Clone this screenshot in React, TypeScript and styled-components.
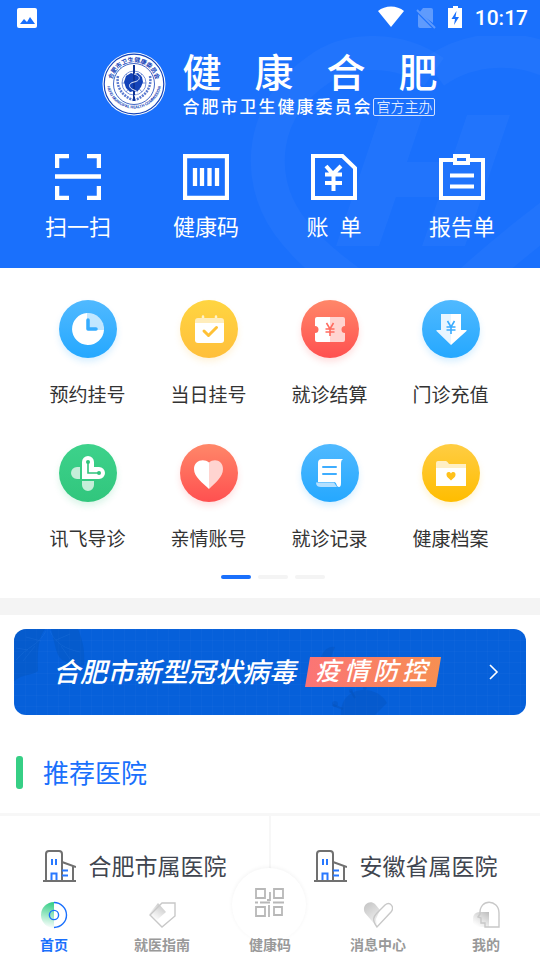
import React from "react";
import styled, { createGlobalStyle } from "styled-components";

const BLUE = "#1a70fc";

const GlobalStyle = createGlobalStyle`
  *, *::before, *::after { box-sizing: border-box; }
  body {
    margin: 0;
    background: #fff;
    color: #333;
    font-family: Roboto, "Noto Sans CJK SC", sans-serif;
    -webkit-font-smoothing: antialiased;
  }
  button {
    margin: 0;
    padding: 0;
    border: 0;
    background: none;
    color: inherit;
    font: inherit;
    cursor: pointer;
  }
  a { color: inherit; text-decoration: none; }
  h1, h2, p { margin: 0; font-weight: 400; }
  svg { display: block; flex: none; }
`;

const Page = styled.div`
  display: flex;
  flex-direction: column;
  min-height: 100vh;
  padding-bottom: 70px;
`;

/* ---------- Header ---------- */

const Header = styled.header`
  position: relative;
  overflow: hidden;
  padding-bottom: 26px;
  background: ${BLUE};
  color: #fff;
`;

const HeaderArt = styled.svg`
  position: absolute;
  right: 0;
  bottom: 0;
`;

const StatusBar = styled.div`
  display: flex;
  align-items: center;
  justify-content: space-between;
  height: 36px;
  padding: 0 12px 0 16px;
`;

const StatusIcons = styled.div`
  display: flex;
  align-items: center;
  gap: 12px;
`;

const Clock = styled.time`
  font: 500 21px/24px Roboto, sans-serif;
`;

const Brand = styled.div`
  display: flex;
  justify-content: center;
  gap: 16px;
  height: 82px;
  padding-top: 16px;
`;

const BrandText = styled.div`
  display: flex;
  flex-direction: column;
`;

const BrandName = styled.h1`
  font-size: 39px;
  line-height: 44px;
  font-weight: 500;
  letter-spacing: 33px;
  margin-right: -33px;
`;

const BrandOrg = styled.div`
  display: flex;
  align-items: center;
  margin-top: 1px;
  font-size: 17px;
  line-height: 20px;
  font-weight: 500;
  letter-spacing: 2px;
`;

const OrgBadge = styled.span`
  margin-left: 1px;
  padding: 0 2px;
  border: 1px solid #d3e2ff;
  border-radius: 2px;
  font-size: 14px;
  line-height: 16px;
  font-weight: 300;
  letter-spacing: 0;
`;

const QuickActions = styled.nav`
  display: grid;
  grid-template-columns: repeat(4, 1fr);
  padding: 36px 14px 0;
  position: relative;
`;

const QuickAction = styled.button`
  display: flex;
  flex-direction: column;
  align-items: center;
  gap: 14px;
  font-size: 22px;
  line-height: 28px;
  white-space: pre;
`;

/* ---------- Services ---------- */

const Services = styled.section`
  padding: 32px 29px 19px 27px;
`;

const ServiceGrid = styled.div`
  display: grid;
  grid-template-columns: repeat(4, 1fr);
  row-gap: 34px;
`;

const Service = styled.button`
  display: flex;
  flex-direction: column;
  align-items: center;
  gap: 24px;
  font-size: 19px;
  line-height: 28px;
`;

const Disc = styled.span<{ $from: string; $to: string }>`
  display: block;
  width: 58px;
  height: 58px;
  border-radius: 50%;
  background: linear-gradient(${(p) => p.$from}, ${(p) => p.$to});
  box-shadow: 0 4px 6px ${(p) => p.$to}2b;
`;

const Pager = styled.div`
  display: flex;
  justify-content: center;
  gap: 7px;
  margin-top: 21px;
  padding-left: 8px;
`;

const PagerDot = styled.button<{ $active?: boolean }>`
  width: 30px;
  height: 4px;
  border-radius: 2px;
  background: ${(p) => (p.$active ? BLUE : "#f4f4f4")};
`;

const Band = styled.div`
  height: 17px;
  background: #f4f4f4;
`;

/* ---------- Banner ---------- */

const Banner = styled.a`
  position: relative;
  display: flex;
  align-items: center;
  height: 86px;
  margin: 14px 14px 0;
  padding: 0 26px 0 39px;
  border-radius: 12px;
  overflow: hidden;
  color: #fff;
  background-color: #0660da;
  background-image: linear-gradient(#ffffff05 1px, transparent 1px),
    linear-gradient(90deg, #ffffff05 1px, transparent 1px);
  background-size: 11px 11px;
`;

const BannerArt = styled.svg`
  position: absolute;
  left: 0;
  top: 0;
`;

const BannerTitle = styled.span`
  position: relative;
  padding-top: 2px;
  font-size: 27px;
  line-height: 36px;
  font-weight: 500;
  font-style: italic;
  white-space: nowrap;
`;

const BannerTag = styled.span`
  position: relative;
  margin-left: 9px;
  padding: 0 10px;
  height: 30px;
  font-size: 25px;
  line-height: 29px;
  font-weight: 500;
  font-style: italic;
  letter-spacing: 4px;
  white-space: nowrap;
  background: linear-gradient(90deg, #fb7476, #f68f51);
  clip-path: polygon(5px 0, 100% 0, calc(100% - 5px) 100%, 0 100%);
`;

const BannerArrow = styled.svg`
  position: relative;
  margin-left: auto;
`;

/* ---------- Hospitals ---------- */

const SectionTitle = styled.h2`
  display: flex;
  align-items: flex-start;
  gap: 20px;
  padding: 37px 16px 16px;
  font-size: 26px;
  line-height: 45px;
  color: ${BLUE};

  &::before {
    content: "";
    width: 7px;
    height: 33px;
    margin-top: 4px;
    border-radius: 3px;
    background: #36cf85;
  }
`;

const Hospitals = styled.div`
  display: grid;
  grid-template-columns: 1fr 1fr;
  border-top: 3px solid #f7f7f7;
`;

const Hospital = styled.a`
  display: flex;
  align-items: center;
  justify-content: center;
  gap: 13px;
  height: 101px;
  padding-top: 2px;
  border-right: 1px solid #f7f7f7;
  font-size: 23px;
  line-height: 32px;
  color: #40454f;

  & + & {
    border-right: 0;
    border-left: 1px solid #f7f7f7;
  }
`;

/* ---------- Tab bar ---------- */

const TabBar = styled.nav`
  position: fixed;
  left: 0;
  right: 0;
  bottom: 0;
  display: grid;
  grid-template-columns: repeat(5, 1fr);
  height: 70px;
  background: #fff;
`;

const Tab = styled.a<{ $active?: boolean }>`
  position: relative;
  padding-top: 11px;
  font-size: 14px;
  line-height: 20px;
  font-weight: 700;
  color: ${(p) => (p.$active ? BLUE : "#999")};
`;

const TabHalo = styled.span`
  position: absolute;
  top: -22px;
  left: 50%;
  width: 74px;
  height: 74px;
  margin-left: -38px;
  border-radius: 50%;
  background: #fff;
  box-shadow: 0 -1px 4px #0000000d;
`;

const TabContent = styled.span<{ $raised?: boolean }>`
  position: relative;
  display: flex;
  flex-direction: column;
  align-items: center;
  gap: ${(p) => (p.$raised ? 17 : 6)}px;
  margin-top: ${(p) => (p.$raised ? -13 : 0)}px;
`;

/* ---------- Drawings ---------- */

const PictureIcon = () => (
  <svg width="22" height="22" viewBox="0 0 22 22" aria-hidden="true">
    <rect x="1" y="1" width="20" height="20" rx="2" fill="#fff" />
    <path d="M4 17l4-5 3 3 3-5 5 7z" fill={BLUE} />
  </svg>
);

const WifiIcon = () => (
  <svg width="26" height="24" viewBox="0 0 26 24" aria-hidden="true">
    <path d="M0 5C7-1 19-1 26 5L13 21z" fill="#fff" />
  </svg>
);

const NoSimIcon = () => (
  <svg width="20" height="22" viewBox="0 0 20 22" aria-hidden="true">
    <path d="M3 6l4-5h8q2 0 2 2v13zM2 7l14 14H4q-2 0-2-2z" fill="#5f9bfd" />
    <path d="M1 3l18 18" stroke="#5f9bfd" strokeWidth="2" />
  </svg>
);

const BatteryIcon = () => (
  <svg width="15" height="24" viewBox="0 0 15 24" aria-hidden="true">
    <path d="M5 0h5v2h4v20H0V2h5z" fill="#fff" />
    <path d="M8.500 5L3.500 13H7l-1 6 5-8H7.500z" fill={BLUE} />
  </svg>
);

const HeaderBackdrop = () => (
  <HeaderArt width="300" height="232" viewBox="240 36 300 232" aria-hidden="true">
    <g fill="none" stroke="#fff" strokeOpacity=".03" strokeWidth="34">
      <path d="M434 72C400 48 350 46 318 70C262 108 254 176 288 224C315 262 360 290 420 330C460 290 500 254 556 212" />
      <path d="M434 72C470 46 520 44 560 66" />
    </g>
    <path
      d="M380 115h43l-16 47h44l16-47h43l-45 131h-43l17-49h-43l-17 49h-43z"
      fill="#fff"
      fillOpacity=".03"
    />
  </HeaderArt>
);

const Emblem = () => (
  <svg width="64" height="64" viewBox="0 0 64 64" role="img" aria-label="合肥市卫生健康委员会">
    <defs>
      <path id="emblemTop" d="M11.500 40A22 22 0 1 1 52.500 40" />
      <path id="emblemBottom" d="M4.500 29A27.500 27.500 0 0 0 59.500 29" />
    </defs>
    <circle cx="32" cy="32" r="31.500" fill="#fff" />
    <circle cx="32" cy="32" r="29.800" fill="none" stroke="#1443b8" strokeWidth="1.200" />
    <circle cx="32" cy="32" r="20.500" fill="none" stroke="#1443b8" strokeWidth=".8" />
    <text fontSize="6" fontWeight="700" fill="#1443b8" textAnchor="middle">
      <textPath href="#emblemTop" startOffset="50%">合肥市卫生健康委员会</textPath>
    </text>
    <text fontSize="4" fontWeight="700" fill="#1443b8" textAnchor="middle">
      <textPath href="#emblemBottom" startOffset="50%">HEFEI MUNICIPAL HEALTH COMMISSION</textPath>
    </text>
    <g fill="none" stroke="#5b7bd0" strokeWidth=".8">
      <circle cx="32" cy="31" r="12" />
      <path d="M16 24c-2 11 4 20 15 24M48 24c2 11-4 20-15 24" strokeWidth="2.500" strokeDasharray="2 1" />
      <path d="M20 31h24M24 22l16 18M40 22L24 40" />
    </g>
    <path d="M24 24l5-3 3 1 4-1 4 4 1 5-2 5-4 5-3-1-4 1-4-4-2-6z" fill="#1443b8" />
    <path d="M32 13v36" stroke="#0c3296" strokeWidth="2" />
    <path d="M32 22c8 2 6 7 0 8s-6 6 0 8 4 5 0 6" fill="none" stroke="#dfe7fa" strokeWidth="1" />
  </svg>
);

const ScanIcon = () => (
  <svg width="46" height="46" viewBox="0 0 46 46" aria-hidden="true">
    <path
      d="M2 14V2h12M32 2h12v12M44 32v12H32M14 44H2V32M0 22.500h46"
      fill="none"
      stroke="#fff"
      strokeWidth="4.500"
    />
  </svg>
);

const BarcodeIcon = () => (
  <svg width="46" height="46" viewBox="0 0 46 46" aria-hidden="true">
    <path
      d="M2 2h42v42H2zM12 14v18M19 14v18M26.500 14v18M34 14v18"
      fill="none"
      stroke="#fff"
      strokeWidth="4.300"
    />
  </svg>
);

const BillIcon = () => (
  <svg width="46" height="46" viewBox="0 0 46 46" fill="none" stroke="#fff" strokeWidth="4" aria-hidden="true">
    <path d="M2 2h29.500L44 14v30H2z" />
    <path d="M15 12l7 8 8-8M14 20.500h17M14 29h17M22.500 19v18" />
  </svg>
);

const ReportIcon = () => (
  <svg width="46" height="46" viewBox="0 0 46 46" fill="none" stroke="#fff" strokeWidth="4" aria-hidden="true">
    <path d="M14 6H2v38h42V6H31M16 2h13v7H16zM11 21.500h24M11 32.500h24" />
  </svg>
);

const Glyph = ({ children }: { children: React.ReactNode }) => (
  <svg width="58" height="58" viewBox="0 0 58 58" aria-hidden="true">
    {children}
  </svg>
);

const ClockGlyph = () => (
  <Glyph>
    <path d="M28 13A16 16 0 1 0 45 30H28z" fill="#fff" />
    <path d="M28 13a16 16 0 0 1 17 17H28z" fill="#fff" fillOpacity=".68" />
    <path d="M29 20v9h8" fill="none" stroke="#35acff" strokeWidth="3.500" strokeLinecap="round" strokeLinejoin="round" />
  </Glyph>
);

const CalendarGlyph = () => (
  <Glyph>
    <path d="M23 16.500v4M36 16.500v4" stroke="#fff2c9" strokeWidth="2.500" strokeLinecap="round" />
    <path d="M15 24v-3q0-3 3-3h23q3 0 3 3v3z" fill="#ffedbc" />
    <path d="M15 23h29v17q0 3-3 3H18q-3 0-3-3z" fill="#fff" />
    <path d="M24 31l4.500 4.500 8-8" fill="none" stroke="#ffc136" strokeWidth="3" strokeLinecap="round" strokeLinejoin="round" />
  </Glyph>
);

const YuanStroke = ({ y, color }: { y: number; color: string }) => (
  <path
    d={`M25.500 ${y}l3.500 6 3.500-6M24.500 ${y + 6}h9M24.500 ${y + 9}h9M29 ${y + 5}v8`}
    fill="none"
    stroke={color}
    strokeWidth="1.600"
  />
);

const TicketGlyph = () => (
  <Glyph>
    <path d="M29 17H16q-2 0-2 2v7a3.500 3.500 0 0 1 0 7v7q0 2 2 2h13z" fill="#fff" />
    <path d="M29 17h13q2 0 2 2v7a3.500 3.500 0 0 0 0 7v7q0 2-2 2H29z" fill="#ffd4d0" />
    <YuanStroke y={23} color="#ff6c60" />
  </Glyph>
);

const DepositGlyph = () => (
  <Glyph>
    <path d="M19 14h10v31L14.500 31q-1-1 1-1H19z" fill="#e8f5ff" />
    <path d="M29 14h10v16h4.500q2 0 1 1L29 45z" fill="#fff" />
    <YuanStroke y={21} color="#3aacff" />
  </Glyph>
);

const GuideGlyph = () => (
  <Glyph>
    <path d="M21 23h-3a6 6 0 0 0 0 12h3zM23 37v4a6 6 0 0 0 12 0v-4z" fill="#c5eed9" />
    <path d="M23 35V18a6 6 0 0 1 12 0v5h5a6 6 0 0 1 0 12z" fill="#fff" />
    <path d="M29 18v11h11" fill="none" stroke="#30c47c" strokeWidth="1.600" />
    <circle cx="29" cy="18" r="2" fill="#30c47c" />
    <circle cx="40" cy="29" r="2" fill="#30c47c" />
  </Glyph>
);

const HeartGlyph = () => (
  <Glyph>
    <path d="M29 18.500C24 14 14 16 14 25c0 8 9 14 15 20z" fill="#fff" />
    <path d="M29 18.500C34 14 43 16 43 25c0 8-8 14-14 20z" fill="#ffd4d0" />
  </Glyph>
);

const RecordGlyph = () => (
  <Glyph>
    <path d="M17 38V19q0-4 4-4h21q-2 1-2 4v20q0 4-2 4c-3 0-2-5-5-5z" fill="#fff" />
    <path d="M15 38.500h18l3 4.500H20q-5 0-5-4.500z" fill="#b4e0ff" />
    <path d="M22 23h13M22 30h13" stroke="#3eadff" strokeWidth="2" strokeLinecap="round" />
  </Glyph>
);

const FolderGlyph = () => (
  <Glyph>
    <path d="M14 25v-6q0-2 2-2h8q1 0 3 3h17v5z" fill="#ffefc4" />
    <path d="M14 24h30v18H14z" fill="#fff" />
    <path d="M29 29.500c-1.500-2.500-5-1.500-4.500 1.500 0 2 2.500 3.500 4.500 5.500 2-2 4.500-3.500 4.500-5.500.5-3-3-4-4.500-1.500z" fill="#ffc11b" />
  </Glyph>
);

const BuildingIcon = () => (
  <svg width="33" height="38" viewBox="0 0 33 38" fill="none" aria-hidden="true">
    <path d="M0 32h33M3 32V5q0-3 3-3h10q3 0 3 3v27M19 13l14 5M30 17v15" stroke="#707070" strokeWidth="2" />
    <path d="M9 10v6M13 10v6M19 21.500h6M19 26.500h6M8.500 31v-6.500h5V31" stroke="#2878ff" strokeWidth="2" />
  </svg>
);

const HomeIcon = () => (
  <svg width="28" height="28" viewBox="0 0 28 28" fill="none" aria-hidden="true">
    <defs>
      <linearGradient id="homeFade" x1=".6" y1="0" x2=".5" y2="1">
        <stop stopColor="#37ce87" />
        <stop offset="1" stopColor="#37ce87" stopOpacity="0" />
      </linearGradient>
    </defs>
    <path d="M14 1a13 13 0 0 0 0 26z" fill="url(#homeFade)" />
    <path d="M14 1.500a12.500 12.500 0 0 1 0 25" stroke={BLUE} strokeWidth="1.400" />
    <circle cx="14" cy="14" r="4.600" stroke={BLUE} strokeWidth="1.400" />
  </svg>
);

const FadeDefs = () => (
  <svg width="0" height="0" aria-hidden="true">
    <defs>
      <linearGradient id="greyFade" x1="1" y1="0" x2=".3" y2="1">
        <stop stopColor="#bcbcbc" />
        <stop offset="1" stopColor="#c4c4c4" stopOpacity="0" />
      </linearGradient>
      <linearGradient id="heartFade" x1=".1" y1="0" x2=".6" y2="1">
        <stop stopColor="#c4c4c4" />
        <stop offset="1" stopColor="#c4c4c4" stopOpacity=".2" />
      </linearGradient>
    </defs>
  </svg>
);

const TagIcon = () => (
  <svg width="28" height="28" viewBox="0 0 28 28" fill="none" aria-hidden="true">
    <path d="M10 2l8 9-9 8-8-6z" fill="url(#greyFade)" />
    <path d="M14 2h13v13L14 26 2 14z" stroke="#c8c8c8" strokeWidth="1.400" />
  </svg>
);

const QrIcon = () => (
  <svg width="30" height="30" viewBox="0 0 30 30" fill="none" stroke="#b8b8b8" strokeWidth="1.800" aria-hidden="true">
    <path d="M1 1h9v9H1zM19 1h9v9h-9zM1 19h9v9H1zM19 19h8v8h-8z" />
    <path d="M15 4v8h-3M14 17v12M0 14.500h3M5 14.500h10M18 14.500h11" />
  </svg>
);

const MessageIcon = () => (
  <svg width="30" height="28" viewBox="0 0 30 28" fill="none" aria-hidden="true">
    <path d="M14 26L2 12C-2 5 6-2 12 3l5 6-4 9z" fill="url(#heartFade)" />
    <path d="M14 26c-5-7-4-10 0-14l8-8c5-4 10 2 6 7z" stroke="#c8c8c8" strokeWidth="1.400" />
  </svg>
);

const ProfileIcon = () => (
  <svg width="30" height="28" viewBox="0 0 30 28" fill="none" aria-hidden="true">
    <path d="M18 11v15H2V18q0-7 7-7z" fill="url(#greyFade)" />
    <path d="M9 13C8-3 28-2 28 12v14H14v-4h-4v-5l-3-1z" stroke="#c8c8c8" strokeWidth="1.400" />
  </svg>
);

const BannerBackdrop = () => (
  <BannerArt width="440" height="86" viewBox="0 0 440 86" aria-hidden="true">
    <path d="M0 0h31c-6 8-8 20-7 42-6 5-14 2-24 10zM37 0h27c5 12 7 22 6 36-7 3-14 1-19-4-9-2-10-18-14-32z" fill="#034fae" fillOpacity=".3" />
    <path
      d="M32 2C25 16 14 17 2 31M27 12L12 8M21 17L9 32M14 21L2 19M36 2c5 12 15 18 30 21M42 11l14-6M47 17l9 13"
      fill="none"
      stroke="#2b7ce2"
      strokeOpacity=".25"
    />
    <g fill="#064fb6" fillOpacity=".35">
      <path d="M327 86c-2-30 36-32 46-12l-12 12z" />
      <circle cx="321" cy="75" r="3" />
      <circle cx="337" cy="62" r="2" />
      <circle cx="351" cy="59" r="2" />
      <path d="M307 28q5-12 14-10l-4 10z" />
      <path d="M319 76l10 4M337 62l4 7" stroke="#064fb6" strokeOpacity=".4" strokeWidth="2" />
    </g>
  </BannerArt>
);

/* ---------- Data ---------- */

const quickActions = [
  { label: "扫一扫", icon: <ScanIcon /> },
  { label: "健康码", icon: <BarcodeIcon /> },
  { label: "账  单", icon: <BillIcon /> },
  { label: "报告单", icon: <ReportIcon /> },
];

const services = [
  { label: "预约挂号", from: "#50b9ff", to: "#25a8ff", glyph: <ClockGlyph /> },
  { label: "当日挂号", from: "#ffd541", to: "#ffbf3b", glyph: <CalendarGlyph /> },
  { label: "就诊结算", from: "#ff8769", to: "#ff5050", glyph: <TicketGlyph /> },
  { label: "门诊充值", from: "#50b9ff", to: "#25a8ff", glyph: <DepositGlyph /> },
  { label: "讯飞导诊", from: "#3dd28b", to: "#31c67d", glyph: <GuideGlyph /> },
  { label: "亲情账号", from: "#ff8769", to: "#ff5050", glyph: <HeartGlyph /> },
  { label: "就诊记录", from: "#50b9ff", to: "#25a8ff", glyph: <RecordGlyph /> },
  { label: "健康档案", from: "#ffcd43", to: "#ffbd00", glyph: <FolderGlyph /> },
];

const hospitals = ["合肥市属医院", "安徽省属医院"];

const tabs = [
  { label: "首页", icon: <HomeIcon />, active: true },
  { label: "就医指南", icon: <TagIcon /> },
  { label: "健康码", icon: <QrIcon />, raised: true },
  { label: "消息中心", icon: <MessageIcon /> },
  { label: "我的", icon: <ProfileIcon /> },
];

export default function App() {
  return (
    <Page>
      <GlobalStyle />
      <Header>
        <HeaderBackdrop />
        <StatusBar>
          <PictureIcon />
          <StatusIcons>
            <WifiIcon />
            <NoSimIcon />
            <BatteryIcon />
            <Clock>10:17</Clock>
          </StatusIcons>
        </StatusBar>
        <Brand>
          <Emblem />
          <BrandText>
            <BrandName>健康合肥</BrandName>
            <BrandOrg>
              合肥市卫生健康委员会<OrgBadge>官方主办</OrgBadge>
            </BrandOrg>
          </BrandText>
        </Brand>
        <QuickActions>
          {quickActions.map((a) => (
            <QuickAction key={a.label} type="button">
              {a.icon}
              {a.label}
            </QuickAction>
          ))}
        </QuickActions>
      </Header>

      <Services>
        <ServiceGrid>
          {services.map((s) => (
            <Service key={s.label} type="button">
              <Disc $from={s.from} $to={s.to}>
                {s.glyph}
              </Disc>
              {s.label}
            </Service>
          ))}
        </ServiceGrid>
        <Pager>
          {[1, 2, 3].map((n) => (
            <PagerDot key={n} type="button" $active={n === 1} aria-label={`第${n}页`} />
          ))}
        </Pager>
      </Services>

      <Band />

      <Banner href="#prevention">
        <BannerBackdrop />
        <BannerTitle>合肥市新型冠状病毒</BannerTitle>
        <BannerTag>疫情防控</BannerTag>
        <BannerArrow width="12" height="16" viewBox="0 0 12 16" aria-hidden="true">
          <path d="M2 1l7 7-7 7" fill="none" stroke="#fff" strokeWidth="1.600" />
        </BannerArrow>
      </Banner>

      <SectionTitle>推荐医院</SectionTitle>
      <Hospitals>
        {hospitals.map((name) => (
          <Hospital key={name} href="#hospitals">
            <BuildingIcon />
            {name}
          </Hospital>
        ))}
      </Hospitals>

      <FadeDefs />
      <TabBar>
        {tabs.map((t) => (
          <Tab key={t.label} href="#tab" $active={t.active}>
            {t.raised && <TabHalo />}
            <TabContent $raised={t.raised}>
              {t.icon}
              {t.label}
            </TabContent>
          </Tab>
        ))}
      </TabBar>
    </Page>
  );
}
